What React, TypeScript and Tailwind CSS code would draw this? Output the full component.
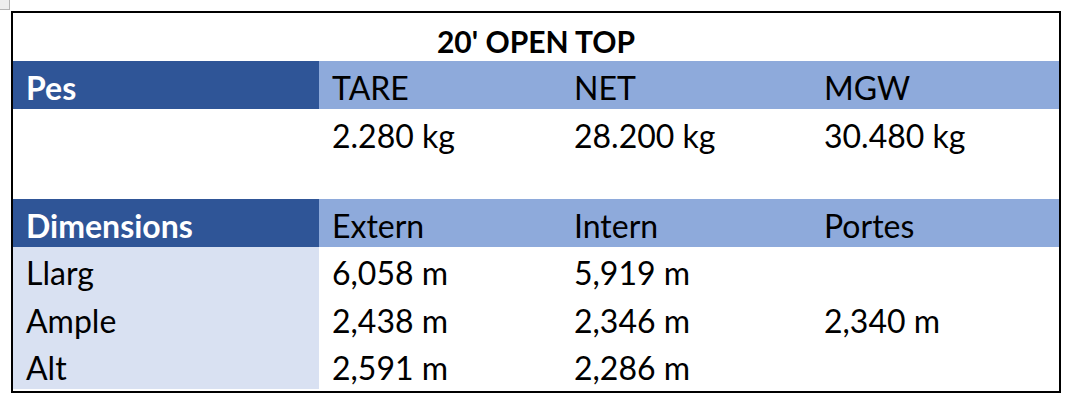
const font = { fontFamily: "Lato, 'Open Sans', sans-serif" }

type Cell = { text?: string; tone?: "dark" | "light" | "lav" | "white"; bold?: boolean }

const toneClass = {
  dark: "bg-[#2f5597] text-white",
  light: "bg-[#8eaadb] text-black",
  lav: "bg-[#d9e1f2] text-black",
  white: "bg-white text-black",
}

const widths = ["w-[306px]", "w-[242px]", "w-[250px]", "flex-1"]

function Row({ cells, h }: { cells: Cell[]; h: string }) {
  return (
    <div className={`flex ${h}`}>
      {cells.map((c, i) => (
        <div
          key={i}
          className={`${widths[i]} ${toneClass[c.tone ?? "white"]} flex items-end pl-[13px] pb-[5px] text-[32px] leading-none ${c.bold ? "font-bold" : ""}`}
        >
          {c.text}
        </div>
      ))}
    </div>
  )
}

export default function App() {
  return (
    <div className="relative w-[1070px] h-[402px] bg-white pt-[11px] pl-[11px]" style={font}>
      {/* broken image corner */}
      <div className="absolute left-0 top-0 w-[10px] h-[10px] bg-[#eeeeee] border-r border-b border-[#b5b5b5]" />

      <div className="w-[1050px] h-[382px] border-2 border-black flex flex-col pb-[2px]">
        <div className="h-[48px] flex items-end justify-center pb-[5px] text-[30px] font-bold leading-none text-black">
          20' OPEN TOP
        </div>
        <Row
          h="h-[48px]"
          cells={[
            { text: "Pes", tone: "dark", bold: true },
            { text: "TARE", tone: "light" },
            { text: "NET", tone: "light" },
            { text: "MGW", tone: "light" },
          ]}
        />
        <Row h="h-[48px]" cells={[{}, { text: "2.280 kg" }, { text: "28.200 kg" }, { text: "30.480 kg" }]} />
        <div className="h-[42px]" />
        <Row
          h="h-[48px]"
          cells={[
            { text: "Dimensions", tone: "dark", bold: true },
            { text: "Extern", tone: "light" },
            { text: "Intern", tone: "light" },
            { text: "Portes", tone: "light" },
          ]}
        />
        <Row h="h-[47px]" cells={[{ text: "Llarg", tone: "lav" }, { text: "6,058 m" }, { text: "5,919 m" }, {}]} />
        <Row h="h-[48px]" cells={[{ text: "Ample", tone: "lav" }, { text: "2,438 m" }, { text: "2,346 m" }, { text: "2,340 m" }]} />
        <Row h="h-[47px]" cells={[{ text: "Alt", tone: "lav" }, { text: "2,591 m" }, { text: "2,286 m" }, {}]} />
      </div>
    </div>
  )
}
